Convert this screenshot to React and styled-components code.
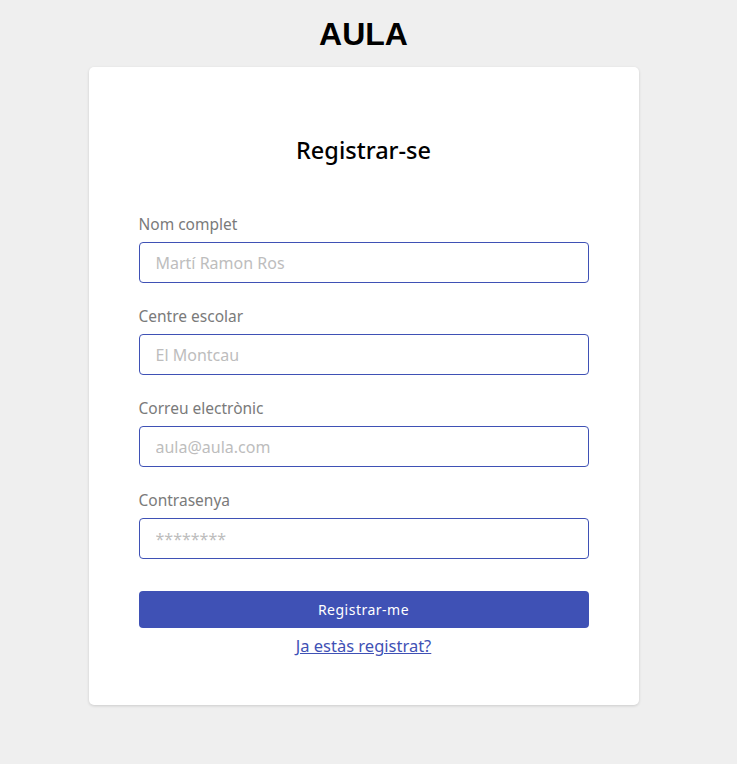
import React from "react";
import styled, { createGlobalStyle } from "styled-components";

const GlobalStyle = createGlobalStyle`
  html, body {
    margin: 0;
    padding: 0;
    background: #efefef;
  }
  body {
    font-family: "Noto Sans", "Open Sans", sans-serif;
  }
`;

const fields = [
  { label: "Nom complet", placeholder: "Martí Ramon Ros", type: "text" },
  { label: "Centre escolar", placeholder: "El Montcau", type: "text" },
  { label: "Correu electrònic", placeholder: "aula@aula.com", type: "email" },
  { label: "Contrasenya", placeholder: "********", type: "password" },
];

const App = () => {
  return (
    <Page>
      <GlobalStyle />
      <Brand>AULA</Brand>
      <Card>
        <Heading>Registrar-se</Heading>
        <Form onSubmit={(e) => e.preventDefault()}>
          {fields.map((f) => (
            <Field key={f.label}>
              <Label>{f.label}</Label>
              <Input type={f.type} placeholder={f.placeholder} />
            </Field>
          ))}
          <Submit type="submit">Registrar-me</Submit>
          <LoginLink href="#">Ja estàs registrat?</LoginLink>
        </Form>
      </Card>
    </Page>
  );
};

export default App;

let Page = styled.div`
  display: flex;
  flex-direction: column;
  align-items: center;
  padding: 16px 10px 60px 0;
  min-height: 764px;
  box-sizing: border-box;
`;

let Brand = styled.h1`
  margin: 0 0 15px 0;
  font-family: "Liberation Sans", Arial, sans-serif;
  font-size: 32px;
  line-height: 36px;
  font-weight: 700;
  color: #000;
`;

let Card = styled.div`
  width: 550px;
  box-sizing: border-box;
  background: #fff;
  border-radius: 5px;
  box-shadow: 0 1px 3px rgba(0, 0, 0, 0.15);
  padding: 68px 50px 49px;
`;

let Heading = styled.h2`
  margin: 0 0 49px 0;
  text-align: center;
  font-size: 23.5px;
  line-height: 30px;
  font-weight: 500;
  color: #000;
`;

let Form = styled.form`
  display: flex;
  flex-direction: column;
  gap: 23px;
`;

let Field = styled.div`
  display: flex;
  flex-direction: column;
  gap: 8px;
`;

let Label = styled.label`
  font-size: 15.5px;
  line-height: 20px;
  color: #7a7a7a;
`;

let Input = styled.input`
  height: 41px;
  box-sizing: border-box;
  border: 1px solid #3f51b5;
  border-radius: 4px;
  padding: 0 16px;
  font-family: inherit;
  font-size: 16px;
  color: #333;
  outline: none;
  &::placeholder {
    color: #bdbdbd;
  }
`;

let Submit = styled.button`
  margin-top: 9px;
  height: 37px;
  border: none;
  border-radius: 4px;
  background: #3f51b5;
  color: #fff;
  font-family: inherit;
  font-size: 14px;
  letter-spacing: 0.5px;
  cursor: pointer;
`;

let LoginLink = styled.a`
  margin-top: -15px;
  align-self: center;
  font-size: 16.5px;
  line-height: 20px;
  color: #3f51b5;
  text-decoration: underline;
`;
